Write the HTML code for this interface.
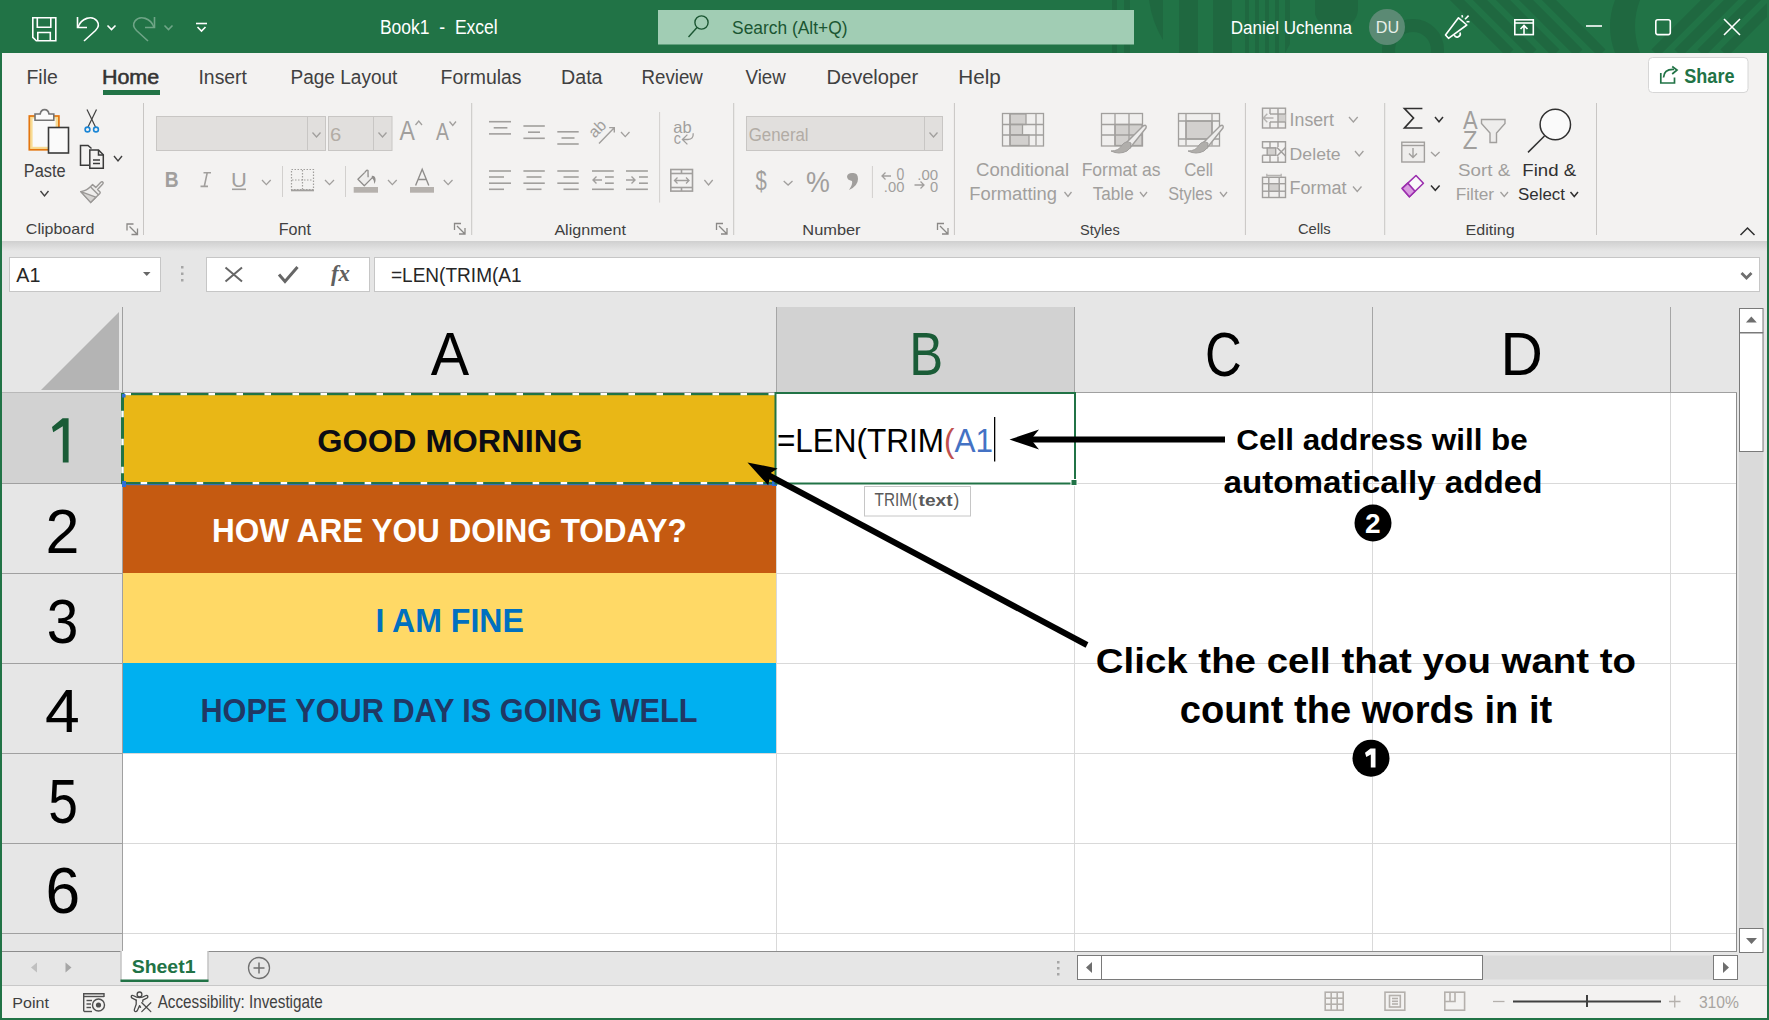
<!DOCTYPE html>
<html><head><meta charset="utf-8"><title>Book1 - Excel</title>
<style>
html,body{margin:0;padding:0;width:1769px;height:1020px;overflow:hidden;background:#217346}
svg{position:absolute;left:0;top:0;display:block}
text{font-family:"Liberation Sans",sans-serif;white-space:pre}
</style></head><body>
<svg width="1769" height="1020" viewBox="0 0 1769 1020">
<defs><clipPath id="tclip"><rect x="0" y="0" width="1767" height="53"/></clipPath><linearGradient id="shadow" x1="0" y1="0" x2="0" y2="1"><stop offset="0" stop-color="#cfcfcf"/><stop offset="1" stop-color="#e6e6e6"/></linearGradient></defs>
<rect x="0" y="0" width="1769" height="1020" fill="#217346"/>
<rect x="2" y="53" width="1765" height="188" fill="#f3f2f1"/>
<rect x="2" y="241" width="1765" height="710" fill="#e6e6e6"/>
<rect x="2" y="241" width="1765" height="10" fill="url(#shadow)"/>
<rect x="2" y="951" width="1765" height="34" fill="#e6e6e6"/>
<rect x="2" y="985" width="1765" height="33" fill="#f3f2f1"/>
<g clip-path="url(#tclip)"><g fill="#1f6840">
<rect x="1112" y="0" width="5" height="53"/><rect x="1124" y="0" width="6" height="53"/>
<path d="M1149,0 H1163 V40 Q1152,22 1149,0 Z"/>
<rect x="1179" y="0" width="19" height="53"/><rect x="1213" y="0" width="19" height="53"/>
<rect x="1245" y="0" width="4" height="53"/><rect x="1255" y="0" width="4" height="53"/>
<rect x="1265" y="0" width="4" height="53"/><rect x="1275" y="0" width="4" height="53"/>
<path d="M1285,0 H1290 V44 L1285,53 Z"/>
<path d="M1315,0 H1358 V10 A22,22 0 0 1 1315,14 Z"/>
</g>
<circle cx="1413" cy="50" r="24.5" fill="none" stroke="#1f6840" stroke-width="13"/>
<g stroke="#1f6840" stroke-width="10" fill="none">
<line x1="1452" y1="-5" x2="1510" y2="53"/><line x1="1475" y1="-5" x2="1533" y2="53"/>
<line x1="1498" y1="-5" x2="1556" y2="53"/><line x1="1521" y1="-5" x2="1579" y2="53"/>
<line x1="1544" y1="-5" x2="1602" y2="53"/>
<line x1="1655" y1="53" x2="1713" y2="-5"/><line x1="1678" y1="53" x2="1736" y2="-5"/>
<line x1="1701" y1="53" x2="1759" y2="-5"/><line x1="1724" y1="53" x2="1782" y2="-5"/>
</g>
<path d="M1615,0 H1640 Q1630,26 1640,53 H1615 Q1605,26 1615,0 Z" fill="#1f6840"/>
</g>
<g fill="none" stroke="#ffffff" stroke-width="1.6">
<path d="M32.8,17.8 H55.8 V40.8 H36.3 L32.8,37.3 Z"/>
<path d="M37.3,17.8 V27.3 H50.8 V17.8"/>
<path d="M37.8,40.8 V32.5 H50.3 V40.8"/>
<path d="M77.5,17 V27.5 H87"/>
<path d="M78.2,27 C81,18.5 92,14.5 97,21 C99.5,24.5 98,28 95.5,30.5 L84,41"/>
<polyline points="107.5,25.5 111.5,29.5 115.5,25.5"/>
</g>
<g fill="none" stroke="#6fa587" stroke-width="1.6">
<path d="M154.5,17 V27.5 H145"/>
<path d="M153.8,27 C151,18.5 140,14.5 135,21 C132.5,24.5 134,28 136.5,30.5 L148,41"/>
<polyline points="164.5,25.5 168.5,29.5 172.5,25.5"/>
</g>
<g fill="none" stroke="#ffffff" stroke-width="1.6">
<line x1="196" y1="23.5" x2="207" y2="23.5"/>
<polyline points="197.5,27 201.5,31 205.5,27"/>
</g>

<text x="379.93" y="34.40" font-size="20.29" font-weight="400" fill="#ffffff" textLength="117.82" lengthAdjust="spacingAndGlyphs">Book1  -  Excel</text>
<rect x="658" y="10" width="476" height="34.5" fill="#a1cdb4"/>
<g fill="none" stroke="#1b5632" stroke-width="1.4"><circle cx="701.5" cy="22.5" r="6.6"/><line x1="697" y1="27.5" x2="688.5" y2="37"/></g>
<text x="732.06" y="33.80" font-size="18.70" font-weight="400" fill="#1b5632" textLength="115.44" lengthAdjust="spacingAndGlyphs">Search (Alt+Q)</text>
<text x="1230.67" y="34.00" font-size="17.97" font-weight="400" fill="#ffffff" textLength="121.22" lengthAdjust="spacingAndGlyphs">Daniel Uchenna</text>
<circle cx="1387" cy="27" r="18" fill="#5b8a74"/>
<text x="1375.74" y="33.00" font-size="15.64" font-weight="400" fill="#e8efe9" textLength="23.33" lengthAdjust="spacingAndGlyphs">DU</text>
<g fill="none" stroke="#ffffff" stroke-width="1.6" stroke-linejoin="round">
<path d="M1445.5,35 L1458.5,17.8 L1466.8,25 L1448.5,38.3 Z"/>
<path d="M1454.2,35.2 A3.2,3.2 0 0 0 1460,32.5"/>
<line x1="1462" y1="15.2" x2="1462.5" y2="17.5"/><line x1="1465" y1="19.3" x2="1468.6" y2="15.6"/><line x1="1466.5" y1="21.7" x2="1469.5" y2="21.7"/>
</g>
<g fill="none" stroke="#ffffff" stroke-width="1.6">
<rect x="1514.8" y="19.8" width="18.5" height="14.8"/>
<line x1="1514.8" y1="23" x2="1533.3" y2="23"/>
<path d="M1524,34.5 V25.5 M1520.5,29 L1524,25.5 L1527.5,29"/>
<line x1="1586" y1="26" x2="1602" y2="26"/>
<rect x="1655.8" y="19.8" width="14.5" height="14.8" rx="2"/>
<path d="M1724,19 L1740,35 M1740,19 L1724,35"/>
</g>

<text x="26.48" y="84.00" font-size="19.74" font-weight="400" fill="#404040" textLength="31.31" lengthAdjust="spacingAndGlyphs">File</text>
<text x="101.92" y="84.00" font-size="20.62" font-weight="400" fill="#333" textLength="57.25" lengthAdjust="spacingAndGlyphs" stroke="#333" stroke-width="0.55">Home</text>
<rect x="103" y="90" width="57" height="5" fill="#217346"/>
<text x="198.49" y="84.00" font-size="20.62" font-weight="400" fill="#404040" textLength="48.45" lengthAdjust="spacingAndGlyphs">Insert</text>
<text x="290.51" y="84.00" font-size="20.62" font-weight="400" fill="#404040" textLength="106.92" lengthAdjust="spacingAndGlyphs">Page Layout</text>
<text x="440.58" y="84.00" font-size="20.15" font-weight="400" fill="#404040" textLength="80.92" lengthAdjust="spacingAndGlyphs">Formulas</text>
<text x="561.06" y="84.00" font-size="20.62" font-weight="400" fill="#404040" textLength="41.51" lengthAdjust="spacingAndGlyphs">Data</text>
<text x="641.54" y="84.00" font-size="19.74" font-weight="400" fill="#404040" textLength="61.23" lengthAdjust="spacingAndGlyphs">Review</text>
<text x="745.50" y="84.00" font-size="19.74" font-weight="400" fill="#404040" textLength="40.27" lengthAdjust="spacingAndGlyphs">View</text>
<text x="826.43" y="84.00" font-size="19.74" font-weight="400" fill="#404040" textLength="91.67" lengthAdjust="spacingAndGlyphs">Developer</text>
<text x="958.39" y="84.00" font-size="19.74" font-weight="400" fill="#404040" textLength="42.45" lengthAdjust="spacingAndGlyphs">Help</text>
<rect x="1648.5" y="57.5" width="99.5" height="35" rx="4" fill="#ffffff" stroke="#d6d6d6"/>
<g fill="none" stroke="#217346" stroke-width="1.7">
<path d="M1660.8,73 V83 H1674.5 V77.5"/>
<path d="M1663.5,77.5 Q1664,69 1674,69.5"/>
<path d="M1672.2,66.5 L1677,70 L1672.2,74"/>
</g>
<text x="1684.32" y="83.00" font-size="19.74" font-weight="700" fill="#217346" textLength="50.13" lengthAdjust="spacingAndGlyphs">Share</text>
<rect x="143.0" y="103" width="1" height="132" fill="#c8c6c4"/>
<rect x="471.2" y="103" width="1" height="132" fill="#c8c6c4"/>
<rect x="733.2" y="103" width="1" height="132" fill="#c8c6c4"/>
<rect x="953.9" y="103" width="1" height="132" fill="#c8c6c4"/>
<rect x="1244.9" y="103" width="1" height="132" fill="#c8c6c4"/>
<rect x="1384.2" y="103" width="1" height="132" fill="#c8c6c4"/>
<rect x="1596.0" y="103" width="1" height="132" fill="#c8c6c4"/>
<g>
<rect x="29.3" y="116" width="29.6" height="33.8" fill="#f8dc94" stroke="#e3760f" stroke-width="1.7"/>
<rect x="32.6" y="118.5" width="23" height="28.3" fill="#fafafa"/>
<path d="M35,120.2 V114 H40.2 Q41,109.6 44.6,109.6 Q48.2,109.6 49,114 H53.8 V120.2 Z" fill="#fafafa" stroke="#747474" stroke-width="1.6"/>
<rect x="48.5" y="127.5" width="20" height="25.5" fill="#fafafa" stroke="#3a3a3a" stroke-width="1.6"/>
</g>
<g fill="none" stroke="#404040" stroke-width="1.2">
<line x1="87" y1="109.5" x2="95.5" y2="127"/><line x1="96.5" y1="109.5" x2="88" y2="127"/>
</g>
<g fill="none" stroke="#1a86d6" stroke-width="1.6"><circle cx="87.5" cy="129.5" r="2.4"/><circle cx="96" cy="129.5" r="2.4"/></g>
<g fill="none" stroke="#3a3a3a" stroke-width="1.5">
<path d="M89,165.2 H80.5 V145.5 H88 L91.5,148.5"/>
<path d="M89.8,168.3 V150 H98.5 L103.3,154.8 V168.3 Z"/>
<path d="M98.5,150 V155 H103.3"/>
<line x1="93" y1="160" x2="100" y2="160"/><line x1="93" y1="163.5" x2="100" y2="163.5"/>
</g>
<g fill="none" stroke="#9a9896" stroke-width="1.4" stroke-linejoin="round">
<path d="M80.8,191.6 Q87,190.5 90.4,186.8 L92.6,184.6 L95.8,187.4 L100.8,182.2 Q102.4,181 103.2,182.8 Q103.2,183.8 102.3,184.6 L97.6,189.5 L100,191.9 Q100.6,192.8 99.8,193.6 L90.6,202.4 Z" fill="#eeedec"/>
<path d="M80.8,191.6 L95.8,197.2 L90.6,202.4 Z" fill="#d6d4d2"/>
<line x1="90.6" y1="187" x2="98.6" y2="195"/>
</g>

<polyline points="40.5,191 44.5,196 48.5,191" fill="none" stroke="#404040" stroke-width="1.4"/>
<polyline points="114,156 118.0,161 122,156" fill="none" stroke="#404040" stroke-width="1.4"/>
<text x="23.72" y="176.60" font-size="17.92" font-weight="400" fill="#404040" textLength="41.95" lengthAdjust="spacingAndGlyphs">Paste</text>
<text x="25.85" y="234.00" font-size="13.75" font-weight="400" fill="#404040" textLength="68.55" lengthAdjust="spacingAndGlyphs">Clipboard</text>
<g fill="none" stroke="#8a8886" stroke-width="1.3"><path d="M127.0,230.5 V224.0 H133.5"/><path d="M129.5,226.5 L137.5,234.5 M137.5,228.5 V234.5 H131.5"/></g>
<rect x="156.5" y="116.5" width="169" height="34" fill="#e1dfdd" stroke="#c8c6c4"/>
<line x1="307.5" y1="117" x2="307.5" y2="150" stroke="#c8c6c4"/>
<rect x="328.5" y="116.5" width="63.5" height="34" fill="#e1dfdd" stroke="#c8c6c4"/>
<line x1="373.5" y1="117" x2="373.5" y2="150" stroke="#c8c6c4"/>
<polyline points="312.5,132.5 316.5,137 320.5,132.5" fill="none" stroke="#a19f9d" stroke-width="1.3"/>
<polyline points="378.5,132.5 382.5,137 386.5,132.5" fill="none" stroke="#a19f9d" stroke-width="1.3"/>
<text x="330.05" y="140.70" font-size="18.06" font-weight="400" fill="#b2aca5" textLength="11.27" lengthAdjust="spacingAndGlyphs">6</text>
<text x="399.50" y="140.00" font-size="28.44" font-weight="400" fill="#a19f9d" textLength="15.39" lengthAdjust="spacingAndGlyphs">A</text>
<polyline points="415.5,125 418.75,121 422,125" fill="none" stroke="#a19f9d" stroke-width="1.3"/>
<text x="436.00" y="140.00" font-size="23.47" font-weight="400" fill="#a19f9d" textLength="12.91" lengthAdjust="spacingAndGlyphs">A</text>
<polyline points="449.5,121.5 452.75,125.5 456,121.5" fill="none" stroke="#a19f9d" stroke-width="1.3"/>
<text x="164.80" y="187.00" font-size="21.33" font-weight="700" fill="#a19f9d" textLength="13.87" lengthAdjust="spacingAndGlyphs">B</text>
<path d="M203.5,172.8 H211 M200.5,186.4 H208 M207.2,172.8 L204.3,186.4" fill="none" stroke="#a19f9d" stroke-width="1.6"/>
<text x="231.13" y="186.50" font-size="20.62" font-weight="400" fill="#a19f9d" textLength="15.81" lengthAdjust="spacingAndGlyphs">U</text>
<rect x="232" y="188.5" width="14" height="1.6" fill="#a19f9d"/>
<polyline points="262,180 266.35,184.6 270.7,180" fill="none" stroke="#a19f9d" stroke-width="1.3"/>
<rect x="282" y="166" width="1" height="31" fill="#d2d0ce"/><rect x="345" y="166" width="1" height="31" fill="#d2d0ce"/>
<g stroke="#a19f9d" stroke-width="1.2" stroke-dasharray="1.5,1.5" fill="none">
<rect x="291.5" y="169.5" width="22" height="20"/>
<line x1="302.5" y1="170" x2="302.5" y2="190"/><line x1="292" y1="180" x2="313" y2="180"/>
</g><rect x="291" y="189.5" width="23" height="1.8" fill="#a19f9d"/>
<polyline points="325,180 329.5,184.6 334,180" fill="none" stroke="#a19f9d" stroke-width="1.3"/>
<g fill="none" stroke="#8f8d8b" stroke-width="1.3" stroke-linejoin="round">
<path d="M364.6,172.6 L357.9,179.3 L364.3,185.7 L372.6,177.4" fill="#eeedec"/>
<path d="M364.6,172.6 L366,171 Q367,169.5 368,170.5 L368.1,177.3"/>
</g>
<path d="M371.8,175.8 Q375.5,175.5 375.6,180 Q375.5,182.5 374.2,184 Q374.2,179.5 371.8,178 Z" fill="#8f8d8b"/>
<rect x="353.7" y="187" width="24.3" height="5.7" fill="#b5b1ad"/>
<polyline points="388,180 392.35,184.6 396.7,180" fill="none" stroke="#a19f9d" stroke-width="1.3"/>
<path d="M415.6,185.6 L422.2,169.3 L428.8,185.6 M418,179.5 H426.4" fill="none" stroke="#8f8d8b" stroke-width="1.4"/>
<rect x="410" y="187" width="24" height="5.7" fill="#b5b1ad"/>
<polyline points="443.8,180 448.15,184.6 452.5,180" fill="none" stroke="#a19f9d" stroke-width="1.3"/>
<text x="278.74" y="235.00" font-size="15.64" font-weight="400" fill="#404040" textLength="32.20" lengthAdjust="spacingAndGlyphs">Font</text>
<g fill="none" stroke="#8a8886" stroke-width="1.3"><path d="M454.5,230 V223.5 H461"/><path d="M457,226 L465,234 M465,228 V234 H459"/></g>
<line x1="489" y1="121.7" x2="511" y2="121.7" stroke="#a19f9d" stroke-width="1.6"/><line x1="493.7" y1="127.8" x2="507.4" y2="127.8" stroke="#a19f9d" stroke-width="1.6"/><line x1="489" y1="133.9" x2="511" y2="133.9" stroke="#a19f9d" stroke-width="1.6"/><line x1="523.4" y1="126" x2="544.8" y2="126" stroke="#a19f9d" stroke-width="1.6"/><line x1="528" y1="132.2" x2="540" y2="132.2" stroke="#a19f9d" stroke-width="1.6"/><line x1="523.4" y1="138.3" x2="544.8" y2="138.3" stroke="#a19f9d" stroke-width="1.6"/><line x1="557.3" y1="131.8" x2="578.7" y2="131.8" stroke="#a19f9d" stroke-width="1.6"/><line x1="561.5" y1="138" x2="574.5" y2="138" stroke="#a19f9d" stroke-width="1.6"/><line x1="557.3" y1="144" x2="578.7" y2="144" stroke="#a19f9d" stroke-width="1.6"/><line x1="489" y1="171" x2="511" y2="171" stroke="#a19f9d" stroke-width="1.6"/><line x1="489" y1="177" x2="504" y2="177" stroke="#a19f9d" stroke-width="1.6"/><line x1="489" y1="183.2" x2="511" y2="183.2" stroke="#a19f9d" stroke-width="1.6"/><line x1="489" y1="189.3" x2="504" y2="189.3" stroke="#a19f9d" stroke-width="1.6"/><line x1="523.4" y1="171" x2="544.8" y2="171" stroke="#a19f9d" stroke-width="1.6"/><line x1="526.5" y1="177" x2="541.5" y2="177" stroke="#a19f9d" stroke-width="1.6"/><line x1="523.4" y1="183.2" x2="544.8" y2="183.2" stroke="#a19f9d" stroke-width="1.6"/><line x1="526.5" y1="189.3" x2="541.5" y2="189.3" stroke="#a19f9d" stroke-width="1.6"/><line x1="557.3" y1="171" x2="578.7" y2="171" stroke="#a19f9d" stroke-width="1.6"/><line x1="563.5" y1="177" x2="578.7" y2="177" stroke="#a19f9d" stroke-width="1.6"/><line x1="557.3" y1="183.2" x2="578.7" y2="183.2" stroke="#a19f9d" stroke-width="1.6"/><line x1="563.5" y1="189.3" x2="578.7" y2="189.3" stroke="#a19f9d" stroke-width="1.6"/><line x1="592" y1="171" x2="613.8" y2="171" stroke="#a19f9d" stroke-width="1.6"/><line x1="605" y1="177" x2="613.8" y2="177" stroke="#a19f9d" stroke-width="1.6"/><line x1="605" y1="183.2" x2="613.8" y2="183.2" stroke="#a19f9d" stroke-width="1.6"/><line x1="592" y1="189.3" x2="613.8" y2="189.3" stroke="#a19f9d" stroke-width="1.6"/><line x1="626" y1="171" x2="647.9" y2="171" stroke="#a19f9d" stroke-width="1.6"/><line x1="639" y1="177" x2="647.9" y2="177" stroke="#a19f9d" stroke-width="1.6"/><line x1="639" y1="183.2" x2="647.9" y2="183.2" stroke="#a19f9d" stroke-width="1.6"/><line x1="626" y1="189.3" x2="647.9" y2="189.3" stroke="#a19f9d" stroke-width="1.6"/>
<g fill="none" stroke="#a19f9d" stroke-width="1.4">
<path d="M602,180 H593 M596.5,176.5 L593,180 L596.5,183.5"/>
<path d="M626,180 H635 M631.5,176.5 L635,180 L631.5,183.5"/>
<path d="M599,143.5 L614,128 M609.2,127.6 H614.3 V132.6"/>
</g>
<text x="0" y="0" font-size="16" fill="#a19f9d" font-family="Liberation Sans" transform="translate(594.8,138.8) rotate(-45)">ab</text>
<polyline points="621,132 625.25,136.6 629.5,132" fill="none" stroke="#a19f9d" stroke-width="1.3"/>
<rect x="659.1" y="112" width="1" height="90.6" fill="#d2d0ce"/>
<text x="673.38" y="132.80" font-size="16.07" font-weight="400" fill="#a19f9d" textLength="18.39" lengthAdjust="spacingAndGlyphs">ab</text>
<text x="673.65" y="143.60" font-size="17.40" font-weight="400" fill="#a19f9d" textLength="7.17" lengthAdjust="spacingAndGlyphs">c</text>
<path d="M682.6,139.5 H688 Q693.6,139.5 693.2,133.2 M687.4,134.6 L682.4,139.5 L687.4,144.4" fill="none" stroke="#a19f9d" stroke-width="1.3"/>
<g fill="none" stroke="#a19f9d" stroke-width="1.6">
<rect x="670.8" y="169.5" width="21.7" height="21.6"/>
<line x1="671" y1="173.5" x2="692.5" y2="173.5"/><line x1="671" y1="187.5" x2="692.5" y2="187.5"/>
<line x1="681.5" y1="169.5" x2="681.5" y2="173.5"/><line x1="681.5" y1="187.5" x2="681.5" y2="191"/>
<path d="M674.5,180.5 H689 M677.5,177.5 L674.5,180.5 L677.5,183.5 M686,177.5 L689,180.5 L686,183.5" stroke-width="1.3"/>
</g>
<polyline points="704.4,180 708.55,185 712.7,180" fill="none" stroke="#a19f9d" stroke-width="1.3"/>
<text x="554.40" y="235.00" font-size="14.43" font-weight="400" fill="#404040" textLength="71.55" lengthAdjust="spacingAndGlyphs">Alignment</text>
<g fill="none" stroke="#8a8886" stroke-width="1.3"><path d="M716.5,230 V223.5 H723"/><path d="M719,226 L727,234 M727,228 V234 H721"/></g>
<rect x="746.5" y="116.5" width="196" height="34" fill="#e1dfdd" stroke="#c8c6c4"/>
<line x1="924.5" y1="117" x2="924.5" y2="150" stroke="#c8c6c4"/>
<polyline points="929.5,132.5 933.5,137 937.5,132.5" fill="none" stroke="#a19f9d" stroke-width="1.3"/>
<text x="748.71" y="141.00" font-size="18.11" font-weight="400" fill="#b2aca5" textLength="59.90" lengthAdjust="spacingAndGlyphs">General</text>
<text x="755.60" y="190.00" font-size="27.00" font-weight="400" fill="#a19f9d" textLength="11.29" lengthAdjust="spacingAndGlyphs">$</text>
<polyline points="783.7,181 788.1,185 792.5,181" fill="none" stroke="#a19f9d" stroke-width="1.3"/>
<text x="805.96" y="191.70" font-size="30.29" font-weight="400" fill="#a19f9d" textLength="23.84" lengthAdjust="spacingAndGlyphs">%</text>
<path d="M852,173 Q858,172 858,179 Q858,186 849,190 Q853,184 852,181 Q847,180 847,176.5 Q847.5,173 852,173 Z" fill="#a19f9d"/>
<rect x="871.9" y="166" width="1" height="32" fill="#d2d0ce"/>
<g fill="none" stroke="#a19f9d" stroke-width="1.3">
<path d="M891,176 H882 M885.5,172.5 L882,176 L885.5,179.5"/>
<path d="M914.5,185 H924 M920.5,181.5 L924,185 L920.5,188.5"/>
</g>
<text x="896.56" y="180.00" font-size="15.64" font-weight="400" fill="#a19f9d" textLength="7.79" lengthAdjust="spacingAndGlyphs">0</text>
<text x="883.85" y="191.70" font-size="15.00" font-weight="400" fill="#a19f9d" textLength="20.52" lengthAdjust="spacingAndGlyphs">.00</text>
<text x="917.33" y="180.00" font-size="15.00" font-weight="400" fill="#a19f9d" textLength="20.84" lengthAdjust="spacingAndGlyphs">.00</text>
<text x="930.04" y="191.70" font-size="15.22" font-weight="400" fill="#a19f9d" textLength="8.12" lengthAdjust="spacingAndGlyphs">0</text>
<text x="802.32" y="234.70" font-size="14.03" font-weight="400" fill="#404040" textLength="58.26" lengthAdjust="spacingAndGlyphs">Number</text>
<g fill="none" stroke="#8a8886" stroke-width="1.3"><path d="M937.5,230 V223.5 H944"/><path d="M940,226 L948,234 M948,228 V234 H942"/></g>
<g stroke="#a19f9d" stroke-width="1.3">
<rect x="1002.5" y="113.5" width="41" height="32.5" fill="#f0efee"/>
<rect x="1010" y="114" width="16" height="10.5" fill="#d2d0ce"/>
<rect x="1010" y="124.5" width="12.5" height="10.5" fill="#d2d0ce"/>
<rect x="1010" y="135" width="19" height="10.5" fill="#d2d0ce"/>
<line x1="1003" y1="124.5" x2="1043" y2="124.5"/><line x1="1003" y1="135" x2="1043" y2="135"/>
<line x1="1010" y1="114" x2="1010" y2="145.5"/><line x1="1036" y1="114" x2="1036" y2="145.5"/>
</g>
<g stroke="#a19f9d" stroke-width="1.3">
<rect x="1101.5" y="113.5" width="41" height="32.5" fill="#f0efee"/>
<rect x="1115" y="124.5" width="27" height="21" fill="#d2d0ce"/>
<line x1="1102" y1="124.5" x2="1142" y2="124.5"/><line x1="1102" y1="135" x2="1142" y2="135"/>
<line x1="1115" y1="114" x2="1115" y2="145.5"/><line x1="1129" y1="114" x2="1129" y2="145.5"/>
</g>
<g stroke="#a19f9d" stroke-width="1.3">
<rect x="1178.5" y="113.5" width="41" height="32.5" fill="#f0efee"/>
<rect x="1186" y="121" width="26" height="18" fill="#d2d0ce"/>
<line x1="1179" y1="121" x2="1219" y2="121"/><line x1="1179" y1="139" x2="1219" y2="139"/>
<line x1="1186" y1="114" x2="1186" y2="145.5"/><line x1="1212" y1="114" x2="1212" y2="145.5"/>
</g>
<g transform="translate(1125,124)"><path d="M0,20 L18,2 Q22,0 21,4 L5,24 Z" fill="#eeedec" stroke="#a19f9d" stroke-width="1.5"/><path d="M6,19 Q1,16 -3,21 Q-6,27 -14,27 Q-6,31 2,27 Q7,24 6,19 Z" fill="#b0aeab" stroke="#a19f9d" stroke-width="1"/></g>
<g transform="translate(1202,124)"><path d="M0,20 L18,2 Q22,0 21,4 L5,24 Z" fill="#eeedec" stroke="#a19f9d" stroke-width="1.5"/><path d="M6,19 Q1,16 -3,21 Q-6,27 -14,27 Q-6,31 2,27 Q7,24 6,19 Z" fill="#b0aeab" stroke="#a19f9d" stroke-width="1"/></g>
<text x="976.13" y="175.80" font-size="17.43" font-weight="400" fill="#a19f9d" textLength="92.89" lengthAdjust="spacingAndGlyphs">Conditional</text>
<text x="969.27" y="199.70" font-size="17.57" font-weight="400" fill="#a19f9d" textLength="87.77" lengthAdjust="spacingAndGlyphs">Formatting</text>
<polyline points="1064.5,192 1068.0,196.5 1071.5,192" fill="none" stroke="#a19f9d" stroke-width="1.3"/>
<text x="1081.63" y="175.80" font-size="18.20" font-weight="400" fill="#a19f9d" textLength="78.92" lengthAdjust="spacingAndGlyphs">Format as</text>
<text x="1092.73" y="199.70" font-size="17.57" font-weight="400" fill="#a19f9d" textLength="40.96" lengthAdjust="spacingAndGlyphs">Table</text>
<polyline points="1140,192 1143.5,196.5 1147,192" fill="none" stroke="#a19f9d" stroke-width="1.3"/>
<text x="1184.21" y="175.80" font-size="17.43" font-weight="400" fill="#a19f9d" textLength="28.89" lengthAdjust="spacingAndGlyphs">Cell</text>
<text x="1168.19" y="199.70" font-size="18.25" font-weight="400" fill="#a19f9d" textLength="44.32" lengthAdjust="spacingAndGlyphs">Styles</text>
<polyline points="1220,192 1223.5,196.5 1227,192" fill="none" stroke="#a19f9d" stroke-width="1.3"/>
<text x="1080.05" y="235.00" font-size="15.25" font-weight="400" fill="#404040" textLength="39.61" lengthAdjust="spacingAndGlyphs">Styles</text>
<g stroke="#a19f9d" stroke-width="1.4" fill="none">
<rect x="1262.5" y="108.2" width="23" height="19.8" fill="#f0efee"/>
<rect x="1278" y="114" width="7.5" height="8" fill="#d2d0ce" stroke="none"/>
<line x1="1270" y1="108.5" x2="1270" y2="114"/><line x1="1270" y1="122" x2="1270" y2="128"/>
<line x1="1278" y1="108.5" x2="1278" y2="128"/>
<line x1="1270" y1="114" x2="1285.5" y2="114"/><line x1="1270" y1="122" x2="1285.5" y2="122"/>
<path d="M1273.5,118 H1263.2 M1267.3,113.8 L1263.2,118 L1267.3,122.2" stroke="#b5b3b1"/>
</g>
<g stroke="#a19f9d" stroke-width="1.4" fill="none">
<path d="M1262.5,148 V141.8 H1285.5 V162.2 H1262.5 V155.2"/>
<line x1="1262.5" y1="148" x2="1276.5" y2="148"/><line x1="1262.5" y1="155.2" x2="1276.5" y2="155.2"/>
<rect x="1267.2" y="148" width="8.5" height="7.2" fill="#d2d0ce"/>
<line x1="1270" y1="142" x2="1270" y2="148"/><line x1="1270" y1="155.2" x2="1270" y2="162"/>
<line x1="1278" y1="142" x2="1278" y2="147"/><line x1="1278" y1="156.5" x2="1278" y2="162"/>
<path d="M1277,147.5 L1285.5,156 M1285.5,147.5 L1277,156" stroke-width="1.5"/>
</g>
<g stroke="#a19f9d" stroke-width="1.4" fill="none">
<rect x="1262.5" y="177.3" width="23" height="20.2" fill="#f0efee"/>
<line x1="1263" y1="183.7" x2="1285.5" y2="183.7"/><line x1="1263" y1="191.2" x2="1285.5" y2="191.2"/>
<line x1="1268.8" y1="177.5" x2="1268.8" y2="197.5"/><line x1="1279.2" y1="177.5" x2="1279.2" y2="197.5"/>
<rect x="1268.8" y="183.7" width="10.4" height="7.5" fill="#d2d0ce"/>
<path d="M1266.8,175.5 H1281.2 M1266.8,173.8 V177 M1281.2,173.8 V177" stroke="#b5b3b1" stroke-width="1.3"/>
</g>
<text x="1289.62" y="126.00" font-size="17.78" font-weight="400" fill="#a19f9d" textLength="44.32" lengthAdjust="spacingAndGlyphs">Insert</text>
<polyline points="1349,117 1353.35,122 1357.7,117" fill="none" stroke="#a19f9d" stroke-width="1.3"/>
<text x="1289.62" y="159.70" font-size="17.29" font-weight="400" fill="#a19f9d" textLength="51.10" lengthAdjust="spacingAndGlyphs">Delete</text>
<polyline points="1355,151 1359.2,156 1363.4,151" fill="none" stroke="#a19f9d" stroke-width="1.3"/>
<text x="1289.60" y="193.80" font-size="17.78" font-weight="400" fill="#a19f9d" textLength="56.94" lengthAdjust="spacingAndGlyphs">Format</text>
<polyline points="1353,186.5 1357.25,191.5 1361.5,186.5" fill="none" stroke="#a19f9d" stroke-width="1.3"/>
<text x="1297.91" y="234.30" font-size="14.43" font-weight="400" fill="#404040" textLength="32.85" lengthAdjust="spacingAndGlyphs">Cells</text>
<path d="M1422.4,108.5 H1404.5 L1413.5,118 L1404.5,128 H1422.4" fill="none" stroke="#303030" stroke-width="1.7"/>
<polyline points="1435,117 1439.0,121.8 1443,117" fill="none" stroke="#303030" stroke-width="1.5"/>
<g fill="none" stroke="#a19f9d" stroke-width="1.4">
<rect x="1401.8" y="142.2" width="22.6" height="19.8" fill="#eeedec"/>
<line x1="1402" y1="145.5" x2="1424" y2="145.5"/>
<path d="M1413,148 V157.5 M1409,153.5 L1413,157.5 L1417,153.5"/>
</g>
<polyline points="1431,152 1435.3,156 1439.6,152" fill="none" stroke="#a19f9d" stroke-width="1.3"/>
<g stroke="#9b2fae" stroke-width="1.6" stroke-linejoin="round">
<path d="M1402.2,188.4 L1416,175.5 L1423.4,183.2 L1409.4,196.8 Z" fill="#fafafa"/>
<path d="M1402.2,188.4 L1407.8,183.1 L1415,191.2 L1409.4,196.8 Z" fill="#d99be0"/>
</g>
<polyline points="1431,185.5 1435.3,190.3 1439.6,185.5" fill="none" stroke="#303030" stroke-width="1.5"/>
<text x="1463.00" y="128.50" font-size="25.74" font-weight="400" fill="#a19f9d" textLength="14.69" lengthAdjust="spacingAndGlyphs">A</text>
<text x="1462.75" y="149.40" font-size="25.46" font-weight="400" fill="#a19f9d" textLength="14.66" lengthAdjust="spacingAndGlyphs">Z</text>
<path d="M1481.5,119.5 H1505 V123.5 L1496.5,133 V142.5 H1490 V133 L1481.5,123.5 Z" fill="#eeedec" stroke="#a19f9d" stroke-width="1.4"/>
<text x="1458.11" y="175.60" font-size="16.50" font-weight="400" fill="#a19f9d" textLength="52.09" lengthAdjust="spacingAndGlyphs">Sort &amp;</text>
<text x="1455.65" y="199.70" font-size="16.75" font-weight="400" fill="#a19f9d" textLength="38.44" lengthAdjust="spacingAndGlyphs">Filter</text>
<polyline points="1500.5,192 1504.25,196.5 1508,192" fill="none" stroke="#a19f9d" stroke-width="1.3"/>
<circle cx="1555.3" cy="124.5" r="15.2" fill="#fafafa" stroke="#303030" stroke-width="1.5"/><line x1="1544.5" y1="136" x2="1528" y2="152.4" stroke="#303030" stroke-width="1.5"/>
<text x="1522.35" y="175.60" font-size="15.80" font-weight="400" fill="#303030" textLength="53.75" lengthAdjust="spacingAndGlyphs">Find &amp;</text>
<text x="1517.97" y="199.70" font-size="16.75" font-weight="400" fill="#303030" textLength="46.97" lengthAdjust="spacingAndGlyphs">Select</text>
<polyline points="1570.5,192 1574.25,196.5 1578,192" fill="none" stroke="#303030" stroke-width="1.5"/>
<text x="1465.54" y="234.70" font-size="14.03" font-weight="400" fill="#404040" textLength="49.16" lengthAdjust="spacingAndGlyphs">Editing</text>
<polyline points="1740.5,235 1747.5,228 1754.5,235" fill="none" stroke="#303030" stroke-width="1.5"/>
<rect x="9.5" y="257.5" width="151" height="34" fill="#ffffff" stroke="#c6c6c6"/>
<path d="M143,272 H150.5 L146.75,276 Z" fill="#666"/>
<g fill="#a6a6a6"><rect x="181" y="266" width="2.5" height="2.5"/><rect x="181" y="272.5" width="2.5" height="2.5"/><rect x="181" y="279" width="2.5" height="2.5"/></g>
<rect x="206.5" y="257.5" width="163" height="34" fill="#ffffff" stroke="#c6c6c6"/>
<path d="M225.5,267.5 L242,281.5 M242,267.5 L225.5,281.5" stroke="#666" stroke-width="2"/>
<path d="M279,274.5 L285,281.5 L297.5,267" fill="none" stroke="#666" stroke-width="3"/>
<rect x="374.5" y="257.5" width="1385" height="34" fill="#ffffff" stroke="#c6c6c6"/>
<polyline points="1741.5,273 1746.5,278 1751.5,273" fill="none" stroke="#6e6e6e" stroke-width="2.8"/>

<text x="16.30" y="282.00" font-size="19.91" font-weight="400" fill="#262626" textLength="24.10" lengthAdjust="spacingAndGlyphs">A1</text>
<text x="331" y="281" font-size="23" font-style="italic" font-weight="700" fill="#606060" style="font-family:'Liberation Serif',serif" textLength="19" lengthAdjust="spacingAndGlyphs">fx</text>
<text x="390.91" y="281.90" font-size="20.00" font-weight="400" fill="#262626" textLength="130.77" lengthAdjust="spacingAndGlyphs">=LEN(TRIM(A1</text>
<rect x="776" y="307" width="298" height="86" fill="#d2d2d2"/>
<rect x="2" y="393" width="120" height="90" fill="#d2d2d2"/>
<rect x="123" y="393" width="1613.5" height="558" fill="#ffffff"/>
<rect x="123" y="393" width="653" height="90" fill="#e9b716"/>
<rect x="123" y="483" width="653" height="90" fill="#c55a11"/>
<rect x="123" y="573" width="653" height="90" fill="#ffd966"/>
<rect x="123" y="663" width="653" height="90" fill="#00b0f0"/>
<rect x="776" y="483" width="960.5" height="1" fill="#d9d9d9"/><rect x="776" y="573" width="960.5" height="1" fill="#d9d9d9"/><rect x="776" y="663" width="960.5" height="1" fill="#d9d9d9"/><rect x="776" y="753" width="960.5" height="1" fill="#d9d9d9"/><rect x="776" y="843" width="960.5" height="1" fill="#d9d9d9"/><rect x="776" y="933" width="960.5" height="1" fill="#d9d9d9"/><rect x="123" y="753" width="653" height="1" fill="#d9d9d9"/><rect x="123" y="843" width="653" height="1" fill="#d9d9d9"/><rect x="123" y="933" width="653" height="1" fill="#d9d9d9"/><rect x="776" y="483" width="1" height="468" fill="#d9d9d9"/><rect x="1074" y="393" width="1" height="558" fill="#d9d9d9"/><rect x="1372" y="393" width="1" height="558" fill="#d9d9d9"/><rect x="1670" y="393" width="1" height="558" fill="#d9d9d9"/>
<rect x="776" y="307" width="1" height="86" fill="#a6a6a6"/><rect x="1074" y="307" width="1" height="86" fill="#a6a6a6"/><rect x="1372" y="307" width="1" height="86" fill="#a6a6a6"/><rect x="1670" y="307" width="1" height="86" fill="#a6a6a6"/><rect x="122" y="307" width="1" height="644" fill="#a0a0a0"/><rect x="123" y="392" width="1614" height="1" fill="#a0a0a0"/><rect x="2" y="392" width="120" height="1" fill="#b8b8b8"/><rect x="2" y="483" width="120" height="1" fill="#a0a0a0"/><rect x="2" y="573" width="120" height="1" fill="#a0a0a0"/><rect x="2" y="663" width="120" height="1" fill="#a0a0a0"/><rect x="2" y="753" width="120" height="1" fill="#a0a0a0"/><rect x="2" y="843" width="120" height="1" fill="#a0a0a0"/><rect x="2" y="933" width="120" height="1" fill="#a0a0a0"/><rect x="1736" y="393" width="1" height="559" fill="#8c8c8c"/><rect x="2" y="951" width="1735" height="1" fill="#8c8c8c"/>
<path d="M41,390 L119,312 V390 Z" fill="#b4b4b4"/>
<text x="430.70" y="374.90" font-size="61.44" font-weight="400" fill="#000" textLength="38.42" lengthAdjust="spacingAndGlyphs">A</text>
<text x="909.33" y="374.90" font-size="61.01" font-weight="400" fill="#1a5c37" textLength="33.91" lengthAdjust="spacingAndGlyphs">B</text>
<text x="1205.11" y="375.60" font-size="63.43" font-weight="400" fill="#000" textLength="36.75" lengthAdjust="spacingAndGlyphs">C</text>
<text x="1500.52" y="375.00" font-size="61.16" font-weight="400" fill="#000" textLength="42.31" lengthAdjust="spacingAndGlyphs">D</text>
<path d="M62.6,418.2 H68.6 V462.6 H62.8 V426.2 L53.2,432.2 L52,427 Z" fill="#1a5c37"/>
<text x="45.54" y="553.00" font-size="63.72" font-weight="400" fill="#000" textLength="33.93" lengthAdjust="spacingAndGlyphs">2</text>
<text x="46.63" y="643.00" font-size="63.43" font-weight="400" fill="#000" textLength="31.58" lengthAdjust="spacingAndGlyphs">3</text>
<text x="45.02" y="731.80" font-size="62.01" font-weight="400" fill="#000" textLength="34.73" lengthAdjust="spacingAndGlyphs">4</text>
<text x="48.34" y="823.30" font-size="63.43" font-weight="400" fill="#000" textLength="29.62" lengthAdjust="spacingAndGlyphs">5</text>
<text x="45.38" y="912.50" font-size="64.00" font-weight="400" fill="#000" textLength="34.64" lengthAdjust="spacingAndGlyphs">6</text>
<text x="317.29" y="451.50" font-size="32.00" font-weight="700" fill="#0c0c14" textLength="265.23" lengthAdjust="spacingAndGlyphs">GOOD MORNING</text>
<text x="212.04" y="542.00" font-size="32.71" font-weight="700" fill="#ffffff" textLength="474.78" lengthAdjust="spacingAndGlyphs">HOW ARE YOU DOING TODAY?</text>
<text x="375.51" y="632.30" font-size="33.42" font-weight="700" fill="#0070c0" textLength="148.32" lengthAdjust="spacingAndGlyphs">I AM FINE</text>
<text x="200.39" y="722.00" font-size="32.71" font-weight="700" fill="#203864" textLength="497.14" lengthAdjust="spacingAndGlyphs">HOPE YOUR DAY IS GOING WELL</text>
<g>
<rect x="122" y="484" width="654" height="1.2" fill="#3b6fd0"/>
<rect x="121" y="393" width="655" height="2.2" fill="#217346"/>
<rect x="121" y="482" width="655" height="2.2" fill="#217346"/>
<rect x="121" y="393" width="3" height="91" fill="#217346"/>
<line x1="124" y1="394.1" x2="776" y2="394.1" stroke="#fff" stroke-width="2.2" stroke-dasharray="6.5,21.5" stroke-dashoffset="-0.5"/>
<line x1="122" y1="483.1" x2="776" y2="483.1" stroke="#fff" stroke-width="2.2" stroke-dasharray="6.5,21.5" stroke-dashoffset="-18.65"/>
<line x1="122.5" y1="395" x2="122.5" y2="482" stroke="#fff" stroke-width="2.5" stroke-dasharray="6.5,21.5" stroke-dashoffset="-15.75"/>
<rect x="122" y="394" width="3.5" height="3.5" fill="#2f6fd6"/>
<rect x="122" y="481" width="4" height="6" fill="#2f6fd6"/><rect x="772" y="481" width="5" height="5" fill="#2f6fd6"/>
<rect x="775.5" y="393" width="299.5" height="90.5" fill="none" stroke="#217346" stroke-width="2"/>
<rect x="1071" y="479.5" width="6" height="6" fill="#217346" stroke="#fff" stroke-width="1"/>
</g>
<text x="776.92" y="452.20" font-size="33.04" font-weight="400" fill="#000" textLength="216.05" lengthAdjust="spacingAndGlyphs">=LEN(TRIM<tspan fill="#c0504d">(</tspan><tspan fill="#4472c4">A1</tspan></text>
<rect x="994" y="417" width="1.3" height="44.5" fill="#000"/>
<rect x="864.5" y="486.5" width="106" height="29.5" fill="#ffffff" stroke="#c6c6c6"/>
<text x="874.56" y="506.00" font-size="18.26" font-weight="400" fill="#5a5a5a" textLength="42.51" lengthAdjust="spacingAndGlyphs">TRIM(</text>
<text x="918.50" y="506.00" font-size="16.76" font-weight="700" fill="#5a5a5a" textLength="34.09" lengthAdjust="spacingAndGlyphs">text</text>
<text x="953.50" y="506.00" font-size="18.26" font-weight="400" fill="#5a5a5a" textLength="5.80" lengthAdjust="spacingAndGlyphs">)</text>
<g fill="#000">
<rect x="1030" y="436.5" width="195" height="6"/>
<path d="M1009.5,439.5 L1039,429.6 L1031,439.5 L1039,449.6 Z"/>
<line x1="1087" y1="645" x2="768" y2="475" stroke="#000" stroke-width="6"/>
<path d="M747.5,462.5 L777.6,468.4 L771,472.7 L768.2,485.3 Z"/>
<circle cx="1373" cy="523" r="18.5"/>
<circle cx="1371" cy="758.2" r="18.5"/>
</g>
<text x="1365.12" y="532.50" font-size="27.73" font-weight="700" fill="#fff" textLength="15.57" lengthAdjust="spacingAndGlyphs">2</text>
<path d="M1370.5,748.5 H1375.5 V767.5 H1370.8 V754.5 L1366.3,757 L1365,752.8 Z" fill="#fff"/>
<text x="1236.32" y="450.20" font-size="29.69" font-weight="700" fill="#000" textLength="291.46" lengthAdjust="spacingAndGlyphs">Cell address will be</text>
<text x="1223.48" y="493.00" font-size="31.32" font-weight="700" fill="#000" textLength="319.14" lengthAdjust="spacingAndGlyphs">automatically added</text>
<text x="1095.80" y="672.50" font-size="35.81" font-weight="700" fill="#000" textLength="540.26" lengthAdjust="spacingAndGlyphs">Click the cell that you want to</text>
<text x="1179.81" y="723.30" font-size="37.99" font-weight="700" fill="#000" textLength="372.38" lengthAdjust="spacingAndGlyphs">count the words in it</text>
<rect x="1739" y="308" width="24.5" height="644" fill="#dadada"/>
<rect x="1739.5" y="308.5" width="23.5" height="24" fill="#fff" stroke="#7a7a7a"/>
<path d="M1745.9,322.6 L1751.35,316.5 L1756.8,322.6 Z" fill="#6e6e6e"/>
<rect x="1739.5" y="333" width="23.5" height="118.5" fill="#fff" stroke="#7a7a7a"/>
<rect x="1739.5" y="928.5" width="23.5" height="24" fill="#fff" stroke="#7a7a7a"/>
<path d="M1746,938 L1751.5,944 L1757,938 Z" fill="#6e6e6e"/>
<g fill="#a6a6a6"><rect x="1057" y="961" width="2.5" height="2.5"/><rect x="1057" y="967" width="2.5" height="2.5"/><rect x="1057" y="973" width="2.5" height="2.5"/></g>
<rect x="1077.5" y="955.5" width="660" height="24" fill="#dadada"/>
<rect x="1077.5" y="955.5" width="24" height="24" fill="#fff" stroke="#7a7a7a"/>
<path d="M1092,962 L1086,967.5 L1092,973 Z" fill="#6e6e6e"/>
<rect x="1101.5" y="955.5" width="381" height="24" fill="#fff" stroke="#7a7a7a"/>
<rect x="1713.5" y="955.5" width="24" height="24" fill="#fff" stroke="#7a7a7a"/>
<path d="M1723,962 L1729,967.5 L1723,973 Z" fill="#6e6e6e"/>

<rect x="120.5" y="951" width="88" height="30" fill="#ffffff"/>
<rect x="120.5" y="951" width="1" height="30" fill="#a6a6a6"/><rect x="207.5" y="951" width="1" height="30" fill="#a6a6a6"/>
<rect x="120.5" y="979.5" width="88" height="2.5" fill="#217346"/>
<path d="M37,962.5 L31,967.5 L37,972.5 Z" fill="#c0c0c0"/>
<path d="M65.5,962.5 L71.5,967.5 L65.5,972.5 Z" fill="#a6a6a6"/>
<circle cx="259" cy="968" r="10.5" fill="none" stroke="#707070" stroke-width="1.3"/>
<path d="M259,962.5 V973.5 M253.5,968 H264.5" stroke="#707070" stroke-width="1.5"/>
<rect x="2" y="985" width="1765" height="1" fill="#c8c8c8"/>

<text x="131.70" y="972.90" font-size="18.93" font-weight="700" fill="#217346" textLength="63.79" lengthAdjust="spacingAndGlyphs">Sheet1</text>
<text x="12.35" y="1008.00" font-size="14.30" font-weight="400" fill="#404040" textLength="36.60" lengthAdjust="spacingAndGlyphs">Point</text>
<g fill="none" stroke="#505050" stroke-width="1.4">
<path d="M83.7,1011.5 V993.7 H104 V997"/><line x1="84" y1="996.5" x2="104" y2="996.5"/>
<line x1="86.5" y1="1000.5" x2="92" y2="1000.5"/><line x1="86.5" y1="1004" x2="91" y2="1004"/><line x1="86.5" y1="1007.5" x2="91" y2="1007.5"/>
<line x1="84" y1="1011.5" x2="92" y2="1011.5"/>
<circle cx="98.5" cy="1005" r="6"/>
</g><circle cx="98.5" cy="1005" r="2.6" fill="#505050"/>
<g fill="none" stroke="#4a4a4a" stroke-width="1.3" stroke-linejoin="round" stroke-linecap="round">
<circle cx="139.5" cy="994.4" r="2.4"/>
<path d="M136.2,1000.2 L133.2,998.7 Q130.9,998 131.3,996.1 Q132,994.8 133.6,995.7 Q136.6,997.5 139.5,997.5 Q142.4,997.5 145.4,995.7 Q147,994.8 147.8,996.1 Q148.1,998 145.8,998.7 L142.8,1000.2 V1001.8"/>
<path d="M136.2,1000.2 V1004.2 L134.4,1009.4 Q134,1011.5 135.8,1011.7 Q137,1011.6 137.6,1010.1 L139.6,1005.6 L140.6,1007.3"/>
<path d="M141.8,1002.8 L150.8,1011.6 M150.8,1002.8 L141.8,1011.6"/>
</g>
<g fill="none" stroke="#b4b0ac" stroke-width="1.6">
<rect x="1325.2" y="992.2" width="18" height="18"/>
<line x1="1331.2" y1="992" x2="1331.2" y2="1010"/><line x1="1337.2" y1="992" x2="1337.2" y2="1010"/>
<line x1="1325" y1="998.2" x2="1343" y2="998.2"/><line x1="1325" y1="1004.2" x2="1343" y2="1004.2"/>
<rect x="1385" y="992.2" width="19.8" height="18"/>
<rect x="1389.5" y="995.5" width="10.8" height="11.5"/>
<line x1="1392" y1="998.5" x2="1398" y2="998.5"/><line x1="1392" y1="1001.3" x2="1398" y2="1001.3"/><line x1="1392" y1="1004" x2="1398" y2="1004"/>
<rect x="1444.8" y="992.2" width="19.8" height="18"/>
<path d="M1445,1001.5 H1455 V992.5 M1450,992.5 V1001.5"/>
</g>
<line x1="1493" y1="1001.5" x2="1504.5" y2="1001.5" stroke="#b4b0ac" stroke-width="1.3"/>
<rect x="1513" y="1000.5" width="148" height="2" fill="#404040"/>
<rect x="1586" y="995" width="2" height="12" fill="#404040"/>
<path d="M1669,1001.5 H1680.5 M1674.75,995.5 V1007.5" stroke="#b4b0ac" stroke-width="1.3"/>

<text x="1698.91" y="1007.90" font-size="15.93" font-weight="400" fill="#a8a4a0" textLength="40.06" lengthAdjust="spacingAndGlyphs">310%</text>
<text x="157.70" y="1008.00" font-size="17.70" font-weight="400" fill="#404040" textLength="164.92" lengthAdjust="spacingAndGlyphs">Accessibility: Investigate</text>
</svg>
</body></html>
